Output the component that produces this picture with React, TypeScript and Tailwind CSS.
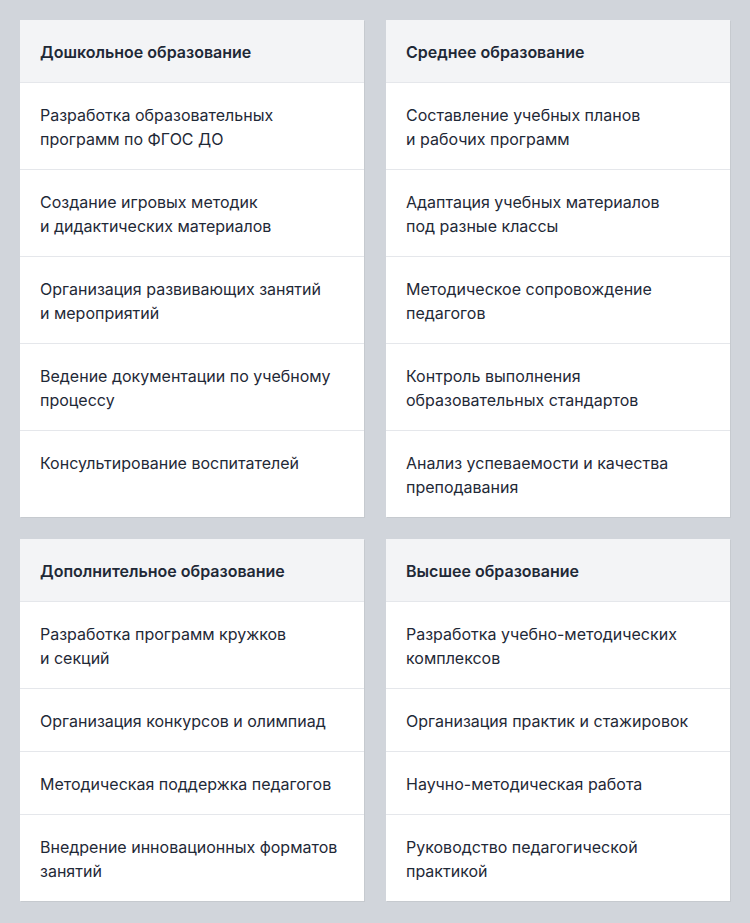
const sections: { title: string; items: string[][] }[] = [
  {
    title: 'Дошкольное образование',
    items: [
      ['Разработка образовательных', 'программ по ФГОС ДО'],
      ['Создание игровых методик', 'и дидактических материалов'],
      ['Организация развивающих занятий', 'и мероприятий'],
      ['Ведение документации по учебному', 'процессу'],
      ['Консультирование воспитателей'],
    ],
  },
  {
    title: 'Среднее образование',
    items: [
      ['Составление учебных планов', 'и рабочих программ'],
      ['Адаптация учебных материалов', 'под разные классы'],
      ['Методическое сопровождение', 'педагогов'],
      ['Контроль выполнения', 'образовательных стандартов'],
      ['Анализ успеваемости и качества', 'преподавания'],
    ],
  },
  {
    title: 'Дополнительное образование',
    items: [
      ['Разработка программ кружков', 'и секций'],
      ['Организация конкурсов и олимпиад'],
      ['Методическая поддержка педагогов'],
      ['Внедрение инновационных форматов', 'занятий'],
    ],
  },
  {
    title: 'Высшее образование',
    items: [
      ['Разработка учебно-методических', 'комплексов'],
      ['Организация практик и стажировок'],
      ['Научно-методическая работа'],
      ['Руководство педагогической', 'практикой'],
    ],
  },
];

export default function App() {
  return (
    <div className="min-h-screen bg-[#d1d5db] p-5 font-['Inter',sans-serif] text-base leading-6 text-[#1f2937]">
      <div className="grid grid-cols-2 gap-x-[22px] gap-y-[22px]">
        {sections.map((s) => (
          <div key={s.title} className="bg-white shadow-[1px_1px_0_rgba(0,0,0,0.05)]">
            {/* Заголовок */}
            <div className="bg-[#f3f4f6] px-5 pt-5 pb-[18px] font-semibold border-b border-[#e5e7eb]">
              {s.title}
            </div>
            {s.items.map((lines, i) => (
              <div
                key={i}
                className={`px-5 pt-5 pb-[18px] ${i < s.items.length - 1 ? 'border-b border-[#e5e7eb]' : ''}`}
              >
                {lines.map((l) => (
                  <div key={l}>{l}</div>
                ))}
              </div>
            ))}
          </div>
        ))}
      </div>
    </div>
  );
}
